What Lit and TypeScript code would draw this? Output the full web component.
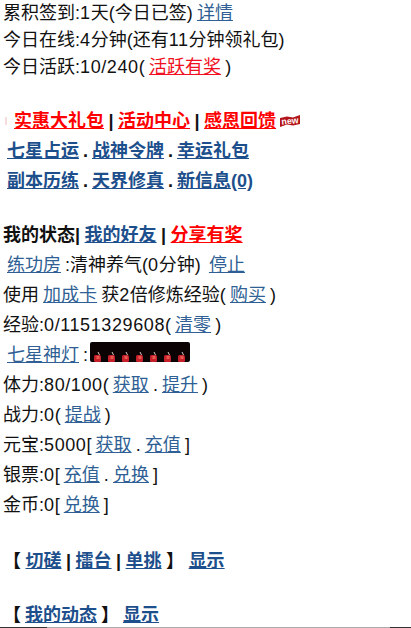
import { LitElement, html, css, svg } from "lit";
import { customElement } from "lit/decorators.js";

@customElement("app-root")
export class AppRoot extends LitElement {
  static styles = css`
    :host {
      display: block;
      position: relative;
      width: 411px;
      height: 628px;
      overflow: hidden;
      background: #fff;
      color: #111;
      font-family: "Liberation Sans", "Noto Sans CJK SC", sans-serif;
      font-size: 18px;
    }
    .page { padding: 0 0 0 3px; display: flex; flex-direction: column; }
    .top { height: 27px; line-height: 27px; white-space: nowrap; word-spacing: -0.7px; }
    .row { height: 30px; line-height: 30px; white-space: nowrap; display: flex; align-items: center; flex: none; word-spacing: -0.9px; }
    .row > span, .row > a { white-space: pre; }
    .gap-a { margin-top: 25px; }
    .gap-b { margin-top: 24px; }
    .gap-c { margin-top: 26px; }
    .gap-d { margin-top: 24px; }
    a { color: #2f5f94; text-decoration: underline; }
    a.red { color: #f01022; }
    b { font-weight: 700; }
    b a { font-weight: 700; color: #1d4f8c; }
    b a.hot { color: #f00; }
    .n { letter-spacing: 0.6px; }
    .ind { padding-left: 4px; }
    .tight { word-spacing: -0.5px; }
    .tighter { word-spacing: -1px; }
    .mark { width: 2px; height: 8px; margin: 0 7px 0 2px; background: #f6dcdc; flex: none; }
    .new { width: 20px; height: 12px; margin-left: 4px; flex: none; }
    .lamps { width: 100px; height: 20px; margin: 2px 0 0 2px; align-self: flex-start; flex: none; }
    .edge {
      position: absolute;
      left: 0;
      right: 0;
      bottom: 0;
      height: 1px;
      background: linear-gradient(to right, #333 0 47px, #aaa 47px 390px, #333 390px);
    }
  `;

  render() {
    return html`<div class="page">
      <div class="top">累积签到:<span class="n">1</span>天(今日已签) <a href="#">详情</a></div>
      <div class="top">今日在线:<span class="n">4</span>分钟(还有<span class="n">11</span>分钟领礼包)</div>
      <div class="top">今日活跃:<span class="n">10/240</span>( <a class="red" href="#">活跃有奖</a> )</div>

      <div class="row gap-a"><i class="mark"></i><b class="tight"><a class="hot" href="#">实惠大礼包</a> | <a class="hot" href="#">活动中心</a> | <a class="hot" href="#">感恩回馈</a></b>
        <svg class="new" viewBox="0 0 20 12">
          <path d="M0 3 L7 1.5 L13 2.5 L20 0 V9 L13 10.5 L7 9.5 L0 12 Z" fill="#b3151a"/>
          <text x="1.5" y="9" font-size="9" font-weight="700" fill="#fff" font-family="Liberation Sans" textLength="17" lengthAdjust="spacingAndGlyphs" transform="rotate(-6 10 6)">new</text>
        </svg>
      </div>
      <div class="row ind"><b class="tighter"><a href="#">七星占运</a> . <a href="#">战神令牌</a> . <a href="#">幸运礼包</a></b></div>
      <div class="row ind"><b class="tighter"><a href="#">副本历练</a> . <a href="#">天界修真</a> . <a href="#">新信息(0)</a></b></div>

      <div class="row gap-b"><b class="tight">我的状态| <a href="#">我的好友</a> | <a class="hot" href="#">分享有奖</a></b></div>
      <div class="row ind"><span><a href="#">练功房</a> :清神养气(<span class="n">0</span>分钟)&nbsp; <a href="#">停止</a></span></div>
      <div class="row"><span>使用 <a href="#">加成卡</a> 获<span class="n">2</span>倍修炼经验( <a href="#">购买</a> )</span></div>
      <div class="row"><span>经验:<span class="n">0/1151329608</span>( <a href="#">清零</a> )</span></div>
      <div class="row ind"><span><a href="#">七星神灯</a> :</span>
        <svg class="lamps" viewBox="0 0 100 20">
          <rect width="100" height="20" rx="2" fill="#0b0204"/>
          ${[0, 1, 2, 3, 4, 5, 6].map(
            (i) => svg`<g transform="translate(${7.5 + i * 14} 0)">
              <path d="M0.5 10 L2 13" stroke="#d8c8c0" stroke-width="1" fill="none"/>
              <rect x="-3.5" y="13" width="7" height="7" rx="1.5" fill="#c8202a"/>
              <rect x="-1" y="14" width="3" height="3" fill="#e85a50"/>
            </g>`
          )}
        </svg>
      </div>
      <div class="row"><span>体力:<span class="n">80/100</span>( <a href="#">获取</a> . <a href="#">提升</a> )</span></div>
      <div class="row"><span>战力:<span class="n">0</span>( <a href="#">提战</a> )</span></div>
      <div class="row"><span>元宝:<span class="n">5000</span>[ <a href="#">获取</a> . <a href="#">充值</a> ]</span></div>
      <div class="row"><span>银票:<span class="n">0</span>[ <a href="#">充值</a> . <a href="#">兑换</a> ]</span></div>
      <div class="row"><span>金币:<span class="n">0</span>[ <a href="#">兑换</a> ]</span></div>

      <div class="row gap-c"><b class="tight">【 <a href="#">切磋</a> | <a href="#">擂台</a> | <a href="#">单挑</a> 】 <a href="#">显示</a></b></div>
      <div class="row gap-d"><b class="tighter">【 <a href="#">我的动态</a> 】 <a href="#">显示</a></b></div>
    </div>
    <div class="edge"></div>`;
  }
}
